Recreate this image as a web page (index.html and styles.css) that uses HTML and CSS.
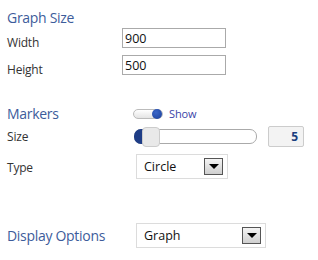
FILE: index.html
```html
<!DOCTYPE html>
<html>
<head>
<meta charset="utf-8">
<link rel="stylesheet" href="styles.css">
</head>
<body>
<div class="panel">
  <div class="title">Graph Size</div>
  <div class="row row-input">
    <span class="label">Width</span>
    <input class="text" type="text" value="900">
  </div>
  <div class="row row-input">
    <span class="label">Height</span>
    <input class="text" type="text" value="500">
  </div>

  <div class="row row-markers">
    <span class="title title-inline">Markers</span>
    <span class="toggle"><span class="knob"></span></span>
    <span class="show">Show</span>
  </div>
  <div class="row row-size">
    <span class="label">Size</span>
    <span class="slider"><span class="fill"></span><span class="handle"></span></span>
    <span class="num">5</span>
  </div>
  <div class="row row-type">
    <span class="label">Type</span>
    <span class="select sel-type"><span class="sel-text">Circle</span><span class="arrow"></span></span>
  </div>

  <div class="row row-display">
    <span class="title title-inline">Display Options</span>
    <span class="select sel-display"><span class="sel-text">Graph</span><span class="arrow"></span></span>
  </div>
</div>
</body>
</html>
```
FILE: styles.css
```css
html, body { margin: 0; padding: 0; background: #fff; }
body { font-family: "Open Sans", "Noto Sans", sans-serif; color: #333; }
.panel { padding: 8px 0 0 7px; width: 311px; box-sizing: border-box; }
.title { font-size: 14px; line-height: 20px; color: #3d5c9b; letter-spacing: -0.3px; }
.row { display: flex; align-items: flex-start; }
.label { font-size: 12px; letter-spacing: -0.2px; line-height: 16px; color: #333; }
.row-input { height: 27px; }
.row-input .label { width: 115px; padding-top: 7px; }
.text { box-sizing: border-box; width: 104px; height: 20px; border: 1px solid #aaa; padding: 0 2px; margin: 0; font-family: "Open Sans", sans-serif; font-size: 12.5px; color: #111; outline: none; }

.row-markers { margin-top: 22px; height: 19px; align-items: center; }
.title-inline { width: 126px; }
.toggle { position: relative; width: 28px; height: 8px; border: 1px solid #bbb; border-radius: 6px; background: linear-gradient(#fff, #e4e4e4); }
.knob { position: absolute; right: 0px; top: -1px; width: 10px; height: 10px; border-radius: 50%; background: radial-gradient(circle at 40% 35%, #3a66c8, #1b3f98); }
.show { margin-left: 6px; font-size: 11px; color: #3a44a8; letter-spacing: -0.1px; }

.row-size { margin-top: 0; height: 27px; align-items: center; }
.row-size .label { width: 127px; }
.slider { position: relative; width: 121px; height: 13px; border: 1px solid #aaa; border-radius: 7px; background: #fff; }
.fill { position: absolute; left: -1px; top: -1px; width: 14px; height: 15px; border-radius: 7px 0 0 7px; background: #1e3d86; }
.handle { position: absolute; left: 7px; top: -3px; width: 16px; height: 18px; border: 1px solid #ccc; border-radius: 4px; background: #e9e9e9; }
.num { margin-left: 11px; box-sizing: border-box; width: 36px; height: 21px; border: 1px solid #ccc; border-radius: 2px; background: #f3f3f3; text-align: right; padding-right: 5px; font-size: 12px; font-weight: bold; line-height: 19px; color: #1b3e7e; }

.row-type { margin-top: 0; height: 32px; align-items: center; }
.row-type .label { width: 129px; padding-top: 4px; }
.select { position: relative; box-sizing: border-box; height: 25px; border: 1px solid #dcdcdc; display: flex; align-items: center; }
.sel-type { width: 92px; }
.sel-display { width: 130px; }
.sel-text { padding-left: 7px; font-size: 12.5px; color: #111; flex: 1; }
.arrow { position: relative; box-sizing: border-box; width: 19px; height: 17px; margin-right: 4px; border: 1px solid #555; background: linear-gradient(#f4f4f4, #cfcfcf); }
.arrow::after { content: ""; position: absolute; left: 4px; top: 5px; border-left: 5px solid transparent; border-right: 5px solid transparent; border-top: 5px solid #000; }

.row-display { margin-top: 41px; height: 25px; align-items: center; }
.row-display .title-inline { width: 129px; }
```
